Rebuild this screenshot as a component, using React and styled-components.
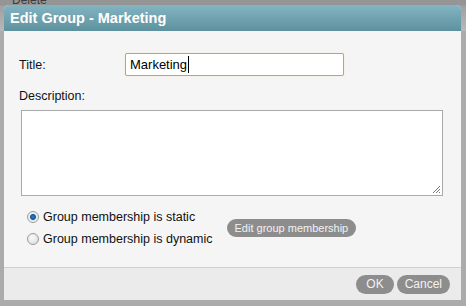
import React from 'react'
import styled, { createGlobalStyle } from 'styled-components'

const Global = createGlobalStyle`
html, body { margin: 0; padding: 0; }
body { font-family: "Liberation Sans", Arial, sans-serif; background: #ababab; }
`

const Page = styled.div`
position: relative;
width: 466px;
height: 306px;
overflow: hidden;
background: #ababab;
`

const BackBar = styled.div`
height: 31px;
background: linear-gradient(#959595 0, #959595 5px, #a0a0a0 6px, #b8b8b8 31px);
overflow: hidden;
`

const BackLink = styled.div`
margin: -7px 0 0 12px;
font-size: 12px;
color: #3a3a3a;
`

const Dialog = styled.div`
position: absolute;
left: 4px;
top: 5px;
width: 457px;
height: 295px;
display: flex;
flex-direction: column;
background: #f5f5f5;
border-radius: 5px 5px 0 0;
overflow: hidden;
`

const TitleBar = styled.div`
height: 26px;
flex: none;
display: flex;
align-items: center;
padding-left: 6px;
background: linear-gradient(#83b4c1, #5e919e);
color: #fff;
font-size: 14.5px;
font-weight: bold;
`

const Body = styled.div`
flex: 1;
padding: 22px 17px 0 15px;
font-size: 12.5px;
color: #111;
`

const Row = styled.div`
display: flex;
align-items: center;
`

const Label = styled.label`
width: 106px;
`

const TextInput = styled.div`
width: 213px;
height: 21px;
border: 1px solid #d4a24c;
border-radius: 2px;
background: #fff;
box-shadow: 0 0 1px #e8c88a;
display: flex;
align-items: center;
padding-left: 4px;
font-size: 13px;
color: #000;
`

const Caret = styled.span`
display: inline-block;
width: 1px;
height: 17px;
background: #000;
margin-left: 1px;
`

const DescLabel = styled.div`
margin-top: 13px;
`

const TextArea = styled.div`
position: relative;
margin: 7px 0 0 2px;
width: 420px;
height: 84px;
border: 1px solid #aaa;
background: #fff;
`

const Grip = styled.svg`
position: absolute;
right: 1px;
bottom: 1px;
`

const Options = styled.div`
display: flex;
align-items: center;
margin: 14px 0 0 8px;
`

const RadioList = styled.div`
display: flex;
flex-direction: column;
gap: 8px;
`

const RadioRow = styled.div`
display: flex;
align-items: center;
gap: 4px;
`

const Radio = styled.span`
width: 10px;
height: 10px;
border-radius: 50%;
border: 1px solid #9a9a9a;
background: ${p => p.checked
  ? 'radial-gradient(circle, #2d7fd0 0, #135a9e 2.5px, #e8e8e8 3.5px, #f4f4f4 5px)'
  : 'radial-gradient(circle at 40% 35%, #fafafa, #d8d8d8)'};
`

const Pill = styled.button`
border: none;
background: #8d8d8d;
color: #f2f2f2;
font-family: "Liberation Sans", Arial, sans-serif;
font-size: 11px;
height: 18px;
padding: 0 8px;
border-radius: 9px;
`

const GroupPill = styled(Pill)`
margin-left: 14px;
`

const Footer = styled.div`
height: 32px;
flex: none;
border-top: 1px solid #cfcfcf;
background: #ebebeb;
display: flex;
justify-content: flex-end;
align-items: center;
gap: 3px;
padding: 0 11px 0 0;
`

const FootPill = styled(Pill)`
font-size: 12px;
height: 19px;
padding: 0 ${p => p.pad}px;
border-radius: 10px;
`

export default function App() {
  return (
    <Page>
      <Global />
      <BackBar>
        <BackLink>Delete</BackLink>
      </BackBar>
      <Dialog>
        <TitleBar>Edit Group - Marketing</TitleBar>
        <Body>
          <Row>
            <Label>Title:</Label>
            <TextInput>Marketing<Caret /></TextInput>
          </Row>
          <DescLabel>Description:</DescLabel>
          <TextArea>
            <Grip width="9" height="9" viewBox="0 0 9 9">
              <path d="M8 1L1 8M8 4L4 8M8 7L7 8" stroke="#777" strokeWidth="1" />
            </Grip>
          </TextArea>
          <Options>
            <RadioList>
              <RadioRow><Radio checked />Group membership is static</RadioRow>
              <RadioRow><Radio />Group membership is dynamic</RadioRow>
            </RadioList>
            <GroupPill>Edit group membership</GroupPill>
          </Options>
        </Body>
        <Footer>
          <FootPill pad={10}>OK</FootPill>
          <FootPill pad={8}>Cancel</FootPill>
        </Footer>
      </Dialog>
    </Page>
  )
}
